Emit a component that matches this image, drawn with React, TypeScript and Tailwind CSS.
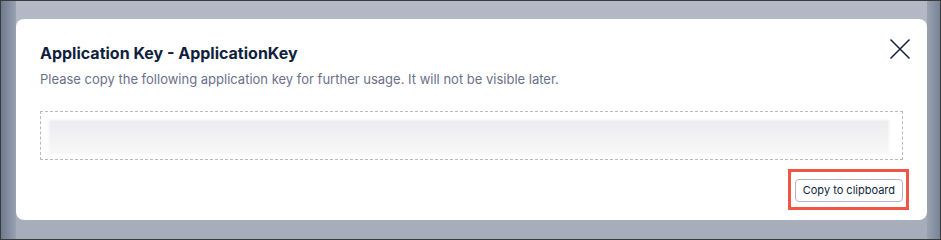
const App = () => {
    return (
        <div
            className="w-[941px] h-[240px] border border-[#3a3a3a] bg-[#b1b7c2] flex overflow-hidden"
            style={{ fontFamily: 'Inter, "Noto Sans", sans-serif' }}
        >
            <div className="w-[15px] h-full bg-gradient-to-r from-[#6f7a8f] to-[#98a1b1]" />
            <div className="flex-1 flex flex-col">
                <div className="pt-[18px] bg-gradient-to-b from-[#b4bac5] to-[#a6adba] flex-1">
                    <div className="w-[911px] h-[201px] bg-white rounded-lg px-6 pt-[22px] flex flex-col">
                        <div className="flex items-start justify-between">
                            <div>
                                <h2 className="text-base leading-6 font-bold text-[#0f1f3d]">
                                    Application Key - ApplicationKey
                                </h2>
                                <p className="text-[13px] leading-5 text-[#6b6f8a] mt-[4px]">
                                    Please copy the following application key for further usage. It will not be visible
                                    later.
                                </p>
                            </div>
                            <button className="mt-[-3px] mr-[-8px] text-[#0f1f3d]">
                                <svg width="22" height="22" viewBox="0 0 22 22" fill="none" stroke="currentColor" strokeWidth="1.5">
                                    <path d="M1.5 1.5L20.5 20.5M20.5 1.5L1.5 20.5" />
                                </svg>
                            </button>
                        </div>
                        <div className="mt-[22px] border border-dashed border-[#b9b6c8] pl-2 pr-[13px] pt-2 pb-[5px]">
                            <div className="h-[34px] bg-gradient-to-b from-[#ececee] to-[#f8f8f9] blur-[1px]" />
                        </div>
                        <div className="flex justify-end mt-[9px] mr-[-6px]">
                            <div className="border-[3px] border-[#f05545] pt-[4px] pb-[5px] pl-[4px] pr-[3px]">
                                <button className="h-[23px] px-[7px] border border-[#b3b3c6] rounded text-[11px] text-[#0f1f3d] bg-white leading-none">
                                    Copy to clipboard
                                </button>
                            </div>
                        </div>
                    </div>
                </div>
            </div>
            <div className="w-[13px] h-full bg-gradient-to-r from-[#9aa2b1] to-[#7a8497]" />
        </div>
    );
};

export default App;
